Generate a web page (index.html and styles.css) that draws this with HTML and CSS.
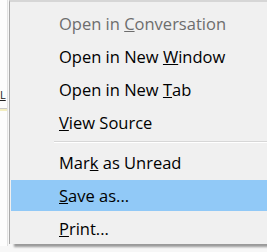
FILE: index.html
```html
<!DOCTYPE html>
<html lang="en">
<head>
  <meta charset="UTF-8">
  <title>Context menu</title>
  <link rel="stylesheet" href="styles.css">
</head>
<body>
  <div class="screen">
    <div class="behind">
      <span class="behind-letter">L</span>
      <div class="behind-rule"></div>
    </div>
    <div class="menu">
      <div class="item disabled">Open in <u>C</u>onversation</div>
      <div class="item">Open in New <u>W</u>indow</div>
      <div class="item">Open in New <u>T</u>ab</div>
      <div class="item"><u>V</u>iew Source</div>
      <div class="separator"></div>
      <div class="item">Mar<u>k</u> as Unread</div>
      <div class="item active"><u>S</u>ave as...</div>
      <div class="item"><u>P</u>rint...</div>
    </div>
  </div>
</body>
</html>
```

FILE: styles.css
```css
body {
    margin: 0;
    background: #f7f7f7;
    font-family: "Open Sans", "Noto Sans", sans-serif;
    font-size: 16.5px;
}
.screen {
    display: flex;
    height: 252px;
    overflow: hidden;
}
.behind {
    width: 7px;
    flex: none;
    background: #fdfdfd;
    border-right: 1px solid #e2e2e2;
    height: 246px;
    display: flex;
    flex-direction: column;
    overflow: hidden;
}
.behind-letter {
    margin-top: 88px;
    color: #222;
    font-size: 11px;
    line-height: 14px;
    text-decoration: underline;
}
.behind-rule {
    margin-top: 6px;
    height: 2px;
    border-top: 1px solid #c8c8c8;
    background: #f3eec0;
}
.menu {
    flex: 1;
    height: 236px;
    background: #f0f0f0;
    border-left: 1px solid #a9a9a9;
    border-top: 2px solid #d6d6d6;
    padding: 6px 0 0 1px;
    box-shadow: 4px 4px 2px -1px #9a9a9a;
    margin-left: 1px;
}
.item {
    height: 31px;
    line-height: 32px;
    margin-bottom: 2px;
    padding-left: 48px;
    color: #000;
    white-space: nowrap;
}
.item.disabled {
    color: #6d6d6d;
}
.item.active {
    background: #91c9f7;
}
.separator {
    height: 1px;
    background: #d7d7d7;
    border-bottom: 1px solid #fff;
    margin: 3px 0 4px 43px;
}
```
